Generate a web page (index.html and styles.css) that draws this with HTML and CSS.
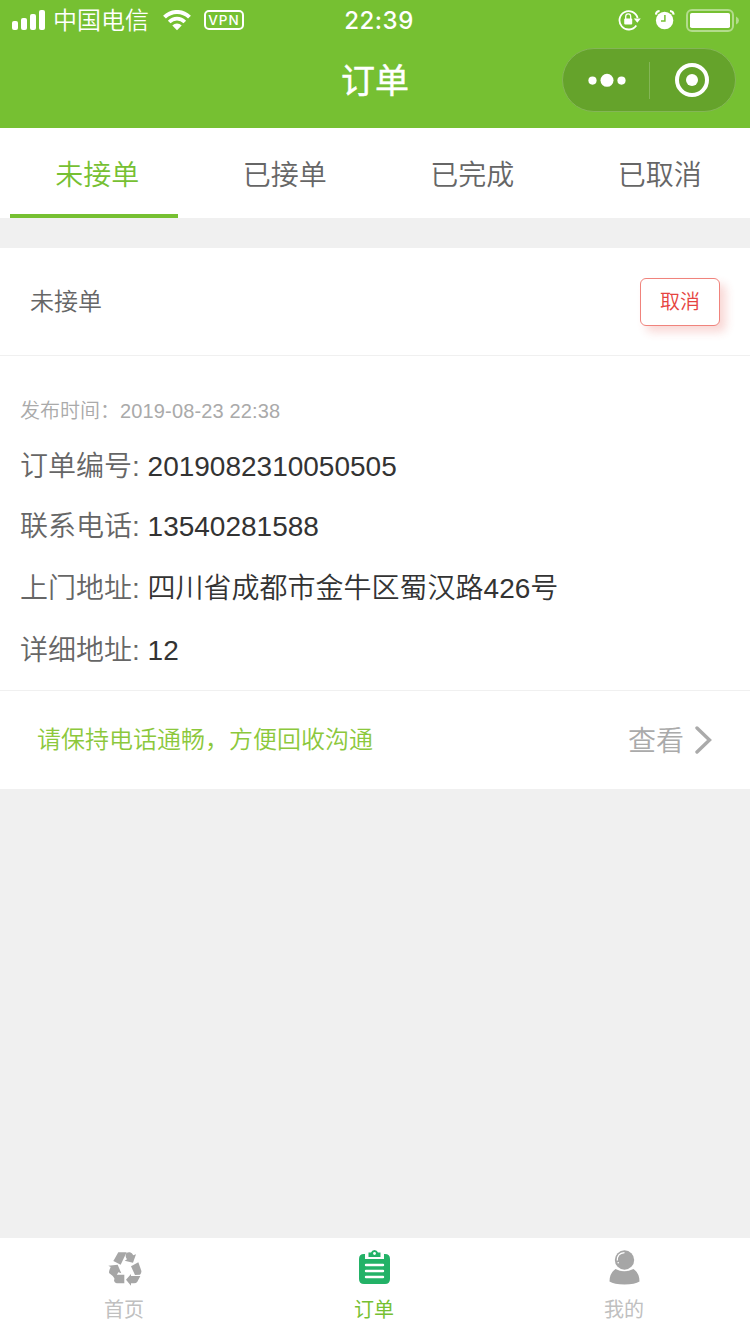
FILE: index.html
```html
<!DOCTYPE html>
<html lang="zh-CN">
<head>
    <meta charset="UTF-8">
    <meta name="viewport" content="width=device-width, initial-scale=1.0">
    <title>订单</title>
    <link rel="stylesheet" href="styles.css">
</head>
<body>
    <header>
        <div class="status-bar">
            <div class="status-left">
                <svg class="signal" width="34" height="20" viewBox="0 0 34 20" fill="#fff">
                    <rect x="0" y="11" width="6" height="9" rx="2"/>
                    <rect x="9" y="8" width="6" height="12" rx="2"/>
                    <rect x="18" y="4" width="6" height="16" rx="2"/>
                    <rect x="27" y="0" width="6" height="20" rx="2"/>
                </svg>
                <span class="carrier">中国电信</span>
                <svg class="wifi" width="28" height="21" viewBox="0 0 28 21">
                    <path d="M1.5 7.2C8.5 .2 19.500 .2 26.500 7.200" fill="none" stroke="#fff" stroke-width="4"/>
                    <path d="M6.200 12C10.600 7.600 17.400 7.600 21.800 12" fill="none" stroke="#fff" stroke-width="3.700"/>
                    <path d="M9.300 15.400C12 12.700 16 12.700 18.700 15.400L14 20.200z" fill="#fff"/>
                </svg>
                <span class="vpn">VPN</span>
            </div>
            <span class="clock">22:39</span>
            <div class="status-right">
                <svg width="24" height="22" viewBox="0 0 24 22">
                    <path d="M18.300 16.500A9.200 9.200 0 1 1 19.600 9" fill="none" stroke="#fff" stroke-width="1.800"/>
                    <path d="M15.800 9.500h7l-3.500 4.200z" fill="#fff"/>
                    <rect x="6.200" y="9.500" width="8" height="6" rx="1" fill="#fff"/>
                    <path d="M7.700 10V7.500a2.500 2.700 0 0 1 5 0V10" fill="none" stroke="#fff" stroke-width="1.300"/>
                </svg>
                <svg class="alarm" width="20" height="20" viewBox="0 0 20 20">
                    <circle cx="9.600" cy="10.500" r="8.700" fill="#fff"/>
                    <path d="M.8 4.600A4 4 0 0 1 4.600 1M15 1a4 4 0 0 1 3.700 3.600" fill="none" stroke="#fff" stroke-width="2"/>
                    <path d="M9.900 5v6H6" fill="none" stroke="#76c032" stroke-width="1.500"/>
                </svg>
                <svg class="battery" width="54" height="24" viewBox="0 0 54 24">
                    <rect x="1" y="1" width="46" height="21" rx="5" fill="none" stroke="#b3dc8c" stroke-width="2"/>
                    <rect x="4" y="4" width="40" height="15" rx="1.800" fill="#fff"/>
                    <path d="M50 7.500q3 1.500 3 4t-3 4z" fill="#b3dc8c"/>
                </svg>
            </div>
        </div>
        <div class="nav-bar">
            <h1>订单</h1>
            <div class="capsule">
                <svg width="38" height="14" viewBox="0 0 38 14" fill="#fff">
                    <circle cx="4.500" cy="7.600" r="4.100"/>
                    <circle cx="19" cy="7.300" r="6.500"/>
                    <circle cx="33.500" cy="7.600" r="4.100"/>
                </svg>
                <span class="capsule-line"></span>
                <svg width="34" height="34" viewBox="0 0 34 34">
                    <circle cx="17" cy="17" r="15" fill="none" stroke="#fff" stroke-width="4"/>
                    <circle cx="17" cy="17" r="6" fill="#fff"/>
                </svg>
            </div>
        </div>
    </header>

    <nav class="tabs">
        <div class="tab active">未接单</div>
        <div class="tab">已接单</div>
        <div class="tab">已完成</div>
        <div class="tab">已取消</div>
    </nav>

    <main>
        <div class="order">
            <div class="order-head">
                <span>未接单</span>
                <button class="cancel">取消</button>
            </div>
            <div class="order-body">
                <p class="time">发布时间：<span>2019-08-23 22:38</span></p>
                <p class="field">订单编号: <span>2019082310050505</span></p>
                <p class="field">联系电话: <span>13540281588</span></p>
                <p class="field address">上门地址: <span>四川省成都市金牛区蜀汉路426号</span></p>
                <p class="field address">详细地址: <span>12</span></p>
            </div>
            <div class="order-foot">
                <span class="notice">请保持电话通畅，方便回收沟通</span>
                <span class="view">查看</span>
                <svg width="18" height="28" viewBox="0 0 18 28">
                    <path d="M2 2L14.500 14L2 26" fill="none" stroke="#aaa" stroke-width="3.400" stroke-linecap="round"/>
                </svg>
            </div>
        </div>
    </main>

    <footer>
        <div class="menu">
            <svg width="34" height="36" viewBox="53 60 102 108" fill="#a6a6a6">
                <path d="M84 67H109L91 104L69 93z"/>
                <path d="M108 69Q113 66 119 67Q125 69 129 76L137 73L128 98L103 92L110 88Q103 79 108 69z"/>
                <path d="M122 109L144 97L153 122Q154 130 149 134L134 135z"/>
                <path d="M54 107L82 104L93 130L84 127L73 146Q69 138 57 130Q54 126 61 111z"/>
                <path d="M75 134H102V160H79Q73 159 71 152z"/>
                <path d="M107 149L122 132V138H150L141 155Q138 160 131 160H122V167z"/>
            </svg>
            <span>首页</span>
        </div>
        <div class="menu active">
            <svg width="34" height="36" viewBox="0 0 34 36">
                <path d="M7 4V9H26V4H27Q32 4 32 9V29Q32 34 27 34H6Q1 34 1 29V9Q1 4 6 4z" fill="#23b267"/>
                <path d="M10.500 2.500H13Q14 0 16.500 0T20 2.500H22.500V7H10.500z" fill="#23b267"/>
                <circle cx="16.500" cy="3.500" r="1.400" fill="#fff"/>
                <path d="M8 15H25M8 21H25M8 27H25" stroke="#fff" stroke-width="2.400" stroke-linecap="round"/>
            </svg>
            <span>订单</span>
        </div>
        <div class="menu">
            <svg width="34" height="36" viewBox="0 0 34 36">
                <path d="M7.500 19Q16 23.500 25.500 19Q31.500 23 31.500 31.500Q27 34.500 16.500 34.500T1.500 31.500Q1.500 23 7.500 19z" fill="#a6a6a6"/>
                <circle cx="16.500" cy="10" r="9.700" fill="#a6a6a6"/>
                <path d="M9.300 10.500Q9 3.200 16.500 2.600" fill="none" stroke="#fff" stroke-width="1.300"/>
                <circle cx="10.200" cy="12.800" r=".8" fill="#fff"/>
            </svg>
            <span>我的</span>
        </div>
    </footer>
</body>
</html>
```
FILE: styles.css
```css
* {
    box-sizing: border-box;
}
body {
    display: flex;
    flex-direction: column;
    height: 1334px;
    margin: 0;
    background-color: #f0f0f0;
    color: #666;
    font-family: "Liberation Sans", "Noto Sans CJK SC", sans-serif;
    font-size: 28px;
    font-weight: 350;
}
svg {
    display: block;
    flex-shrink: 0;
}
header {
    height: 128px;
    background-color: #76c032;
    color: white;
}
.status-bar {
    display: grid;
    grid-template-columns: 1fr auto 1fr;
    align-items: center;
    height: 40px;
    padding: 0 10px 0 12px;
}
.status-left,
.status-right {
    display: flex;
    align-items: center;
}
.status-right {
    justify-content: flex-end;
}
.carrier {
    margin-left: 7px;
    padding-top: 2px;
    font-size: 24px;
    line-height: 38px;
}
.wifi {
    margin-left: 14px;
}
.vpn {
    width: 40px;
    height: 20px;
    margin-left: 13px;
    border: 2px solid white;
    border-radius: 5px;
    font-family: Inter, sans-serif;
    font-size: 13.5px;
    font-weight: 500;
    letter-spacing: 1px;
    line-height: 17px;
    text-align: center;
}
.clock {
    padding-left: 6px;
    font-family: Inter, sans-serif;
    font-size: 24px;
    font-weight: 500;
    letter-spacing: 0.5px;
}
.alarm {
    margin: 0 11px 0 13px;
}
.battery {
    margin-top: 1px;
}
.nav-bar {
    display: grid;
    grid-template-columns: 1fr auto 1fr;
    height: 80px;
    padding: 8px 14px;
}
h1 {
    grid-column: 2;
    margin: 0;
    font-size: 34px;
    font-weight: 400;
    line-height: 66px;
    -webkit-text-stroke: 0.5px white;
}
.capsule {
    display: flex;
    align-items: center;
    justify-content: space-between;
    justify-self: end;
    width: 174px;
    height: 64px;
    padding: 0 26px 0 25px;
    border: 1px solid #84b656;
    border-radius: 32px;
    background-color: #65a32b;
}
.capsule-line {
    width: 1px;
    height: 37px;
    margin-right: 2px;
    background-color: #84b656;
}
.tabs {
    display: flex;
    height: 90px;
    background-color: white;
}
.tab {
    flex: 1;
    margin: 0 10px;
    padding-left: 7px;
    line-height: 96px;
    text-align: center;
}
.tab.active {
    border-bottom: 4px solid #76c032;
    color: #76c032;
}
main {
    flex: 1;
    padding-top: 30px;
}
.order {
    background-color: white;
}
.order-head {
    display: flex;
    align-items: center;
    justify-content: space-between;
    height: 108px;
    padding: 0 30px;
    border-bottom: 1px solid #f0f0f0;
    font-size: 24px;
}
.order-head span {
    padding-bottom: 4px;
}
.cancel {
    width: 80px;
    height: 48px;
    padding: 0 0 2px;
    border: 1px solid #f0837c;
    border-radius: 6px;
    background-color: white;
    box-shadow: 6px 6px 10px rgba(224, 60, 50, 0.2);
    color: #e64340;
    font-family: inherit;
    font-size: 20px;
    font-weight: 350;
}
.order-body {
    height: 335px;
    padding: 36px 20px 0;
    border-bottom: 1px solid #f0f0f0;
}
p {
    margin: 0;
}
.time {
    height: 45px;
    color: #aaa;
    font-size: 20px;
    line-height: 39px;
}
.time span {
    letter-spacing: 0.15px;
}
.field {
    height: 60px;
    line-height: 60px;
    white-space: nowrap;
}
.field span {
    color: #333;
}
.address {
    height: 62px;
    line-height: 63px;
}
.order-foot {
    display: flex;
    align-items: center;
    height: 98px;
    padding: 0 37px;
}
.notice {
    flex: 1;
    padding-bottom: 5px;
    color: #8cc83c;
    font-size: 24px;
}
.view {
    margin-right: 11px;
    padding-bottom: 2px;
    color: #aaa;
}
footer {
    display: flex;
    height: 96px;
    background-color: white;
}
.menu {
    display: flex;
    flex: 1;
    flex-direction: column;
    align-items: center;
    padding: 12px 2px 0 0;
    color: #c0c0c0;
    font-size: 20px;
    font-weight: 400;
}
.menu svg {
    margin-left: 1px;
}
.menu span {
    margin-top: 9px;
    line-height: 30px;
}
.menu.active {
    color: #76c032;
}
```
